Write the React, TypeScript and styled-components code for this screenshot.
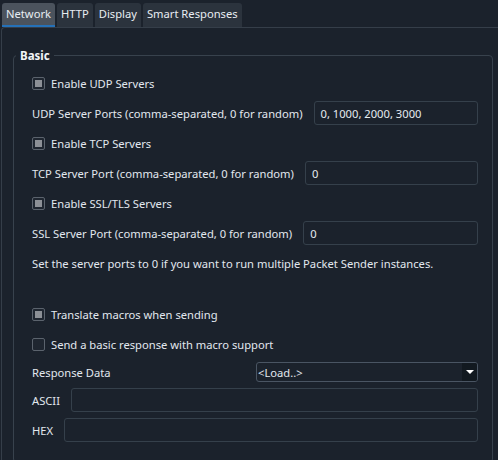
import React from 'react';
import styled, { createGlobalStyle } from 'styled-components';

const GlobalStyle = createGlobalStyle`
  html, body {
    margin: 0;
    padding: 0;
    background: #1b222c;
    overflow: hidden;
  }
  body {
    font-family: "Noto Sans", "Open Sans", sans-serif;
    font-size: 11.2px;
    color: #e2e8ef;
  }
`;

const tabs = ['Network', 'HTTP', 'Display', 'Smart Responses'];

const Window = styled.div`
  width: 498px;
  height: 460px;
  background: #1b222c;
  padding-top: 3px;
  box-sizing: border-box;
`;

const TabBar = styled.div`
  display: flex;
  gap: 2px;
  padding-left: 2px;
  height: 24px;
`;

const Tab = styled.div<{ $active?: boolean }>`
  display: flex;
  align-items: center;
  padding: 0 4px 2px;
  border-radius: 3px 3px 0 0;
  background: ${(p) => (p.$active ? '#4b535d' : '#2b333d')};
  color: #e8edf2;
  font-size: 11.2px;
  border-bottom: 2px solid ${(p) => (p.$active ? '#2571b8' : 'transparent')};
  box-sizing: border-box;
`;

const Pane = styled.div`
  border-top: 1px solid #353e49;
  border-left: 1px solid #353e49;
  border-top-left-radius: 4px;
  margin-left: 1px;
  padding: 20px 5px 0 11px;
  height: 440px;
  box-sizing: border-box;
`;

const Group = styled.fieldset`
  margin: 0;
  border: 1px solid #38424d;
  border-radius: 4px;
  padding: 8px 14px 20px 18px;
  display: flex;
  flex-direction: column;
  gap: 6px;
`;

const Legend = styled.legend`
  font-weight: bold;
  font-size: 11.5px;
  color: #f2f5f8;
  padding: 0 4px;
  margin-left: -16px;
`;

const Row = styled.div<{ $h?: number; $gapTop?: number }>`
  display: flex;
  align-items: center;
  gap: 11px;
  height: ${(p) => p.$h ?? 24}px;
  margin-top: ${(p) => p.$gapTop ?? 0}px;
  white-space: nowrap;
`;

const CheckRow = styled.label`
  display: flex;
  align-items: center;
  gap: 6px;
  height: 24px;
`;

const Box = styled.span<{ $checked?: boolean }>`
  width: 13px;
  height: 13px;
  border: 1px solid #5b636d;
  border-radius: 2px;
  background: #1f2630;
  display: flex;
  align-items: center;
  justify-content: center;
  box-sizing: border-box;
  &::after {
    content: '';
    display: ${(p) => (p.$checked ? 'block' : 'none')};
    width: 7px;
    height: 7px;
    background: #8c9096;
  }
`;

const Field = styled.div`
  flex: 1;
  height: 24px;
  border: 1px solid #35404b;
  border-radius: 3px;
  box-sizing: border-box;
  padding: 0 6px;
  display: flex;
  align-items: center;
  color: #e6ebf0;
`;

const Combo = styled.div`
  flex: 0 0 222px;
  height: 20px;
  border: 1px solid #4a5563;
  border-radius: 3px;
  box-sizing: border-box;
  display: flex;
  align-items: center;
  padding-left: 1px;
  margin-left: auto;
  overflow: hidden;
`;

const ComboText = styled.span`
  flex: 1;
`;

const ComboArrow = styled.span`
  width: 15px;
  height: 18px;
  background: #121920;
  display: flex;
  align-items: center;
  justify-content: center;
  &::after {
    content: '';
    border-left: 4px solid transparent;
    border-right: 4px solid transparent;
    border-top: 4px solid #ffffff;
  }
`;

const Check = ({ checked, label }: { checked?: boolean; label: string }) => (
  <CheckRow>
    <Box $checked={checked} />
    <span>{label}</span>
  </CheckRow>
);

const App: React.FC = () => (
  <Window>
    <GlobalStyle />
    <TabBar>
      {tabs.map((t, i) => (
        <Tab key={t} $active={i === 0}>{t}</Tab>
      ))}
    </TabBar>
    <Pane>
      <Group>
        <Legend>Basic</Legend>
        <Check checked label="Enable UDP Servers" />
        <Row>
          <span>UDP Server Ports (comma-separated, 0 for random)</span>
          <Field>0, 1000, 2000, 3000</Field>
        </Row>
        <Check checked label="Enable TCP Servers" />
        <Row>
          <span>TCP Server Port (comma-separated, 0 for random)</span>
          <Field>0</Field>
        </Row>
        <Check checked label="Enable SSL/TLS Servers" />
        <Row>
          <span>SSL Server Port (comma-separated, 0 for random)</span>
          <Field>0</Field>
        </Row>
        <Row>
          <span>Set the server ports to 0 if you want to run multiple Packet Sender instances.</span>
        </Row>
        <Row $gapTop={21}>
          <Check checked label="Translate macros when sending" />
        </Row>
        <Check label="Send a basic response with macro support" />
        <Row $h={20}>
          <span>Response Data</span>
          <Combo>
            <ComboText>&lt;Load..&gt;</ComboText>
            <ComboArrow />
          </Combo>
        </Row>
        <Row>
          <span>ASCII</span>
          <Field />
        </Row>
        <Row>
          <span>HEX</span>
          <Field />
        </Row>
      </Group>
    </Pane>
  </Window>
);

export default App;
